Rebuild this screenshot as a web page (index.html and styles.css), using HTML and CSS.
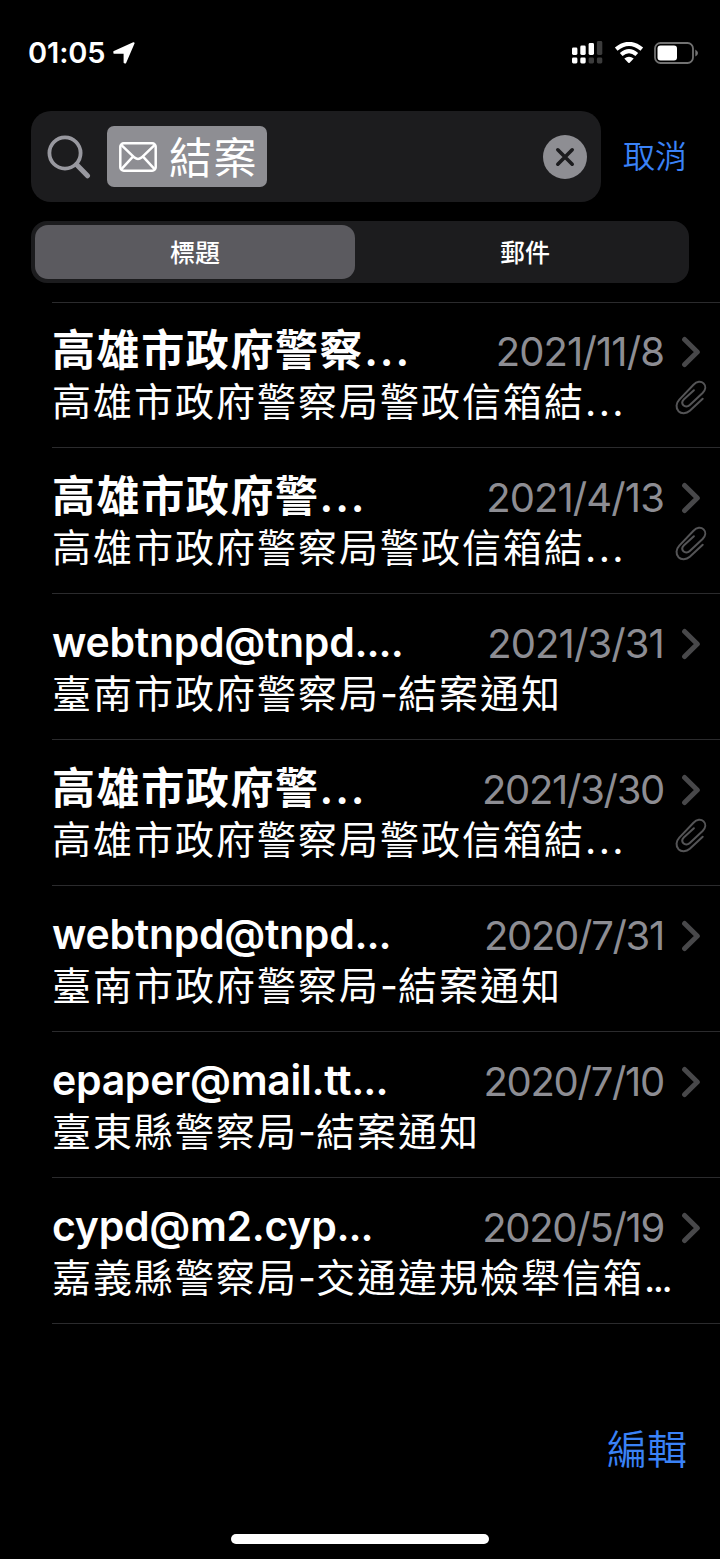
FILE: index.html
```html
<!DOCTYPE html>
<html lang="zh-Hant">
<head>
<meta charset="utf-8">
<title>結案</title>
<link rel="stylesheet" href="styles.css">
</head>
<body>
<svg class="defs" aria-hidden="true">
  <symbol id="chevron" viewBox="0 0 20 32"><path d="M3.6 3.5 16.3 16 3.6 28.5" fill="none" stroke="#48484a" stroke-width="5" stroke-linecap="round" stroke-linejoin="round"/></symbol>
  <symbol id="clip" viewBox="0 0 32 36"><path d="M27.7 18.7 14.8 30.8C11.2 34 6.2 34 3.5 31.2.6 28 1 23.2 4.3 19.6L18.5 4.7C21.8 1.2 26 .8 28.6 3.4 31.2 6 30.8 9.8 27.6 13L14.8 25C12.7 26.9 10 26.9 8.4 25.3 6.8 23.6 7 21.2 9 19.2L18.9 10.2" fill="none" stroke="#545456" stroke-width="2" stroke-linecap="round" stroke-linejoin="round"/></symbol>
</svg>
<div class="screen">
  <header class="status">
    <span class="time">01:05</span>
    <svg class="arrow" width="22" height="22" viewBox="0 0 22 22"><path d="M20.6 1.2 12.2 20.6 11.6 20.4V10.8H1.4L1.3 9.8Z" fill="#fff" stroke="#fff" stroke-width="2" stroke-linejoin="round"/></svg>
    <svg class="signal" width="31" height="24" viewBox="0 0 31 24">
      <g fill="#fff"><rect x="0" y="7.5" width="5.4" height="7.5" rx="1.4"/><rect x="8.3" y="5.5" width="5.4" height="9.5" rx="1.4"/><rect x="16.6" y="3" width="5.4" height="12" rx="1.4"/><rect x="0" y="17.5" width="5.4" height="6" rx="1.4"/><rect x="8.3" y="17.5" width="5.4" height="6" rx="1.4"/></g>
      <g fill="#3c3c3c"><rect x="24.9" y="1" width="5.4" height="14" rx="1.4"/><rect x="16.6" y="17.5" width="5.4" height="6" rx="1.4"/><rect x="24.9" y="17.5" width="5.4" height="6" rx="1.4"/></g>
    </svg>
    <svg class="wifi" width="30" height="22" viewBox="0 0 30 22">
      <path d="M2.2 7.2Q15-3.4 27.8 7.2M7.2 12.5Q15 5.6 22.8 12.5" fill="none" stroke="#fff" stroke-width="4.1"/>
      <path d="M10.3 16.6Q15 13 19.7 16.6L15.7 20.7Q15 21.4 14.3 20.7Z" fill="#fff"/>
    </svg>
    <svg class="battery" width="44" height="22" viewBox="0 0 44 22">
      <rect x="1" y="1" width="38" height="20" rx="5.5" fill="none" stroke="#727272" stroke-width="1.8"/>
      <rect x="3.5" y="3.5" width="19.5" height="15" rx="3" fill="#fff"/>
      <path d="M41.3 7.5Q44 9 44 11T41.3 14.5Z" fill="#727272"/>
    </svg>
  </header>

  <div class="searchbar">
    <div class="field">
      <svg class="magnifier" width="44" height="44" viewBox="0 0 44 44"><circle cx="18" cy="18" r="15.6" fill="none" stroke="#98989f" stroke-width="3.8"/><path d="M29.5 29.5 40.5 40.8" stroke="#98989f" stroke-width="5" stroke-linecap="round"/></svg>
      <div class="token">
        <svg width="38" height="30" viewBox="0 0 38 30" fill="none" stroke="#fff" stroke-width="2.5" stroke-linejoin="round"><rect x="1.3" y="1.3" width="35.4" height="27.4" rx="3.5"/><path d="M2.2 2.8 15.5 15.6Q19 18.4 22.5 15.6L35.8 2.8M2.2 27.4 14.2 14.4M35.8 27.4 23.8 14.4"/></svg>
        <span class="query">結案</span>
      </div>
      <svg class="clear" width="44" height="44" viewBox="0 0 44 44"><circle cx="22" cy="22" r="22" fill="#8e8e93"/><path d="M14.8 14.8 29.2 29.2M29.2 14.8 14.8 29.2" stroke="#1c1c1e" stroke-width="3.6" stroke-linecap="round"/></svg>
    </div>
    <span class="cancel">取消</span>
  </div>

  <div class="segments">
    <span class="segment selected">標題</span>
    <span class="segment">郵件</span>
  </div>

  <main class="list">
    <article class="mail first">
      <div class="top"><span class="name cjk">高雄市政府警察<span class="dots">...</span></span><span class="date wide">2021/11/8</span><svg class="chevron"><use href="#chevron"/></svg></div>
      <div class="bottom"><span class="subject">高雄市政府警察局警政信箱結<span class="dots">...</span></span><svg class="clip"><use href="#clip"/></svg></div>
    </article>
    <article class="mail">
      <div class="top"><span class="name cjk">高雄市政府警<span class="dots">...</span></span><span class="date wide">2021/4/13</span><svg class="chevron"><use href="#chevron"/></svg></div>
      <div class="bottom"><span class="subject">高雄市政府警察局警政信箱結<span class="dots">...</span></span><svg class="clip"><use href="#clip"/></svg></div>
    </article>
    <article class="mail">
      <div class="top"><span class="name">webtnpd@tnpd<span class="tail">....</span></span><span class="date wide">2021/3/31</span><svg class="chevron"><use href="#chevron"/></svg></div>
      <div class="bottom"><span class="subject">臺南市政府警察局<span class="dash">-</span>結案通知</span></div>
    </article>
    <article class="mail">
      <div class="top"><span class="name cjk">高雄市政府警<span class="dots">...</span></span><span class="date">2021/3/30</span><svg class="chevron"><use href="#chevron"/></svg></div>
      <div class="bottom"><span class="subject">高雄市政府警察局警政信箱結<span class="dots">...</span></span><svg class="clip"><use href="#clip"/></svg></div>
    </article>
    <article class="mail">
      <div class="top"><span class="name">webtnpd@tnpd<span class="tail">...</span></span><span class="date">2020/7/31</span><svg class="chevron"><use href="#chevron"/></svg></div>
      <div class="bottom"><span class="subject">臺南市政府警察局<span class="dash">-</span>結案通知</span></div>
    </article>
    <article class="mail">
      <div class="top"><span class="name">epaper@mail.tt<span class="tail">...</span></span><span class="date">2020/7/10</span><svg class="chevron"><use href="#chevron"/></svg></div>
      <div class="bottom"><span class="subject">臺東縣警察局<span class="dash">-</span>結案通知</span></div>
    </article>
    <article class="mail">
      <div class="top"><span class="name">cypd@m2.cyp<span class="tail">...</span></span><span class="date">2020/5/19</span><svg class="chevron"><use href="#chevron"/></svg></div>
      <div class="bottom"><span class="subject">嘉義縣警察局<span class="dash">-</span>交通違規檢舉信箱<span class="tight">...</span></span></div>
    </article>
  </main>

  <footer class="toolbar"><span class="edit">編輯</span></footer>
  <div class="home"></div>
</div>
</body>
</html>
```
FILE: styles.css
```css
* { box-sizing: border-box; }
body {
  margin: 0;
  background: #000;
  color: #fff;
  font-family: Inter, "Noto Sans CJK TC", sans-serif;
}
.defs { display: none; }
svg { display: block; flex: none; }
.screen {
  width: 720px;
  height: 1559px;
  display: flex;
  flex-direction: column;
  overflow: hidden;
  background: #000;
}
.status {
  height: 111px;
  padding: 41px 22px 0 28px;
  display: flex;
  align-items: flex-start;
}
.time {
  width: 85px;
  font-size: 29px;
  font-weight: 600;
  line-height: 24px;
  letter-spacing: -0.1px;
  white-space: nowrap;
}
.arrow { margin-top: 1px; }
.signal { margin-left: auto; margin-top: -1px; }
.wifi { margin: 1px 0 0 11px; }
.battery { margin: 1px 0 0 10px; }

.searchbar {
  display: flex;
  align-items: center;
  padding-left: 31px;
  height: 91px;
}
.field {
  width: 570px;
  height: 91px;
  border-radius: 20px;
  background: #1c1c1e;
  display: flex;
  align-items: center;
  padding: 0 14px 0 16px;
}
.token {
  width: 160px;
  height: 61px;
  margin-left: 16px;
  padding-left: 12px;
  border-radius: 7px;
  background: #8e8e93;
  display: flex;
  align-items: center;
  gap: 12px;
}
.query { font-size: 43px; line-height: 60px; padding-top: 3px; letter-spacing: 1.5px; white-space: nowrap; font-weight: 400; }
.clear { margin-left: auto; }
.cancel {
  margin-left: 22px;
  color: #3a82f7;
  font-size: 32px;
  line-height: 44px;
  padding-top: 1px;
  font-weight: 350;
}
.segments {
  margin: 19px 31px 0;
  height: 62px;
  padding: 4px;
  border-radius: 16px;
  background: #1c1c1e;
  display: flex;
}
.segment {
  flex: 1;
  height: 54px;
  padding-left: 10px;
  border-radius: 13px;
  text-align: center;
  font-size: 25px;
  line-height: 56px;
  font-weight: 500;
}
.segment.selected { flex: 0 0 320px; padding-left: 0; background: #5b5a5f; }

.list { margin: 19px 0 0 52px; border-top: 1px solid #2b2b2d; }
.mail { height: 146px; border-bottom: 1px solid #2b2b2d; padding-top: 24px; }
.mail.first { height: 145px; padding-top: 23px; }
.top { display: flex; height: 49px; align-items: center; padding-right: 19px; }
.name {
  flex: 1;
  font-size: 41px;
  font-weight: 600;
  letter-spacing: -0.3px;
  line-height: 49px;
  white-space: nowrap;
}
.name.cjk { font-size: 43px; letter-spacing: 1.6px; padding-bottom: 1px; }
.name .dots { letter-spacing: 1.9px; }
.name .tail { letter-spacing: -1px; }
.date {
  font-size: 40px;
  line-height: 49px;
  color: #8d8d93;
  letter-spacing: -1.3px;
  font-feature-settings: "calt" 0;
  white-space: nowrap;
  padding-top: 1px;
  margin-right: -1px;
}
.date.wide { letter-spacing: -0.9px; }
.chevron { width: 20px; height: 32px; margin: 2px 0 0 18px; }
.bottom { display: flex; height: 54px; justify-content: space-between; padding-right: 13px; }
.subject { font-size: 39px; line-height: 54px; letter-spacing: 2px; white-space: nowrap; font-weight: 400; }
.subject .dots { letter-spacing: 2.4px; }
.subject .tight { letter-spacing: -2.5px; }
.dash { letter-spacing: 0; }
.clip { width: 32px; height: 36px; margin-top: 5px; }
.toolbar { margin-top: 96px; padding-right: 33px; text-align: right; }
.edit { display: block; font-size: 40px; line-height: 60px; font-weight: 350; color: #3a82f7; }
.home { width: 258px; height: 10px; margin: 54px 0 0 231px; border-radius: 5px; background: #fff; }
```
